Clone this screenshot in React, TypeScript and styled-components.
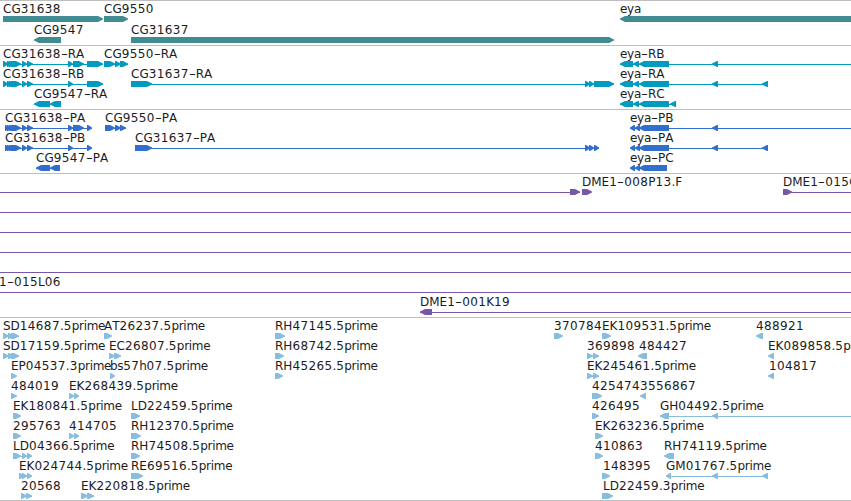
import React from "react";
import styled, { createGlobalStyle } from "styled-components";

type Block = [number, number];

interface IFeature {
    label?: string;
    // label start, when it is not the start of the feature
    labelAt?: number;
    reverse?: boolean;
    blocks?: Block[];
    // extent of the connecting line, when it is longer than the blocks
    span?: Block;
}

interface ITrack {
    name: string;
    color: string;
    rowHeight: number;
    padBottom: number;
    rows: IFeature[][];
}

const GlobalStyle = createGlobalStyle`
    body{
        margin: 0;
        background-color: #fff;
        overflow: hidden;
    }
`;

const VIEWER = styled.div`
    width: 851px;
    height: 501px;
    box-sizing: border-box;
    overflow: hidden;
    background-color: #fff;
    border-bottom: 1px solid #bebebe;
    font-family: "DejaVu Sans", sans-serif;
    font-size: 12px;
    font-kerning: none;
    line-height: 14px;
    color: #000;
`;
VIEWER.displayName = "VIEWER";

const TRACK = styled.section<{ $color: string; $padBottom: number }>`
    padding: 1px 0 ${props => props.$padBottom}px;
    border-top: 1px solid #bebebe;
    color: ${props => props.$color};
`;
TRACK.displayName = "TRACK";

const ROW = styled.div<{ $height: number }>`
    position: relative;
    height: ${props => props.$height}px;
`;
ROW.displayName = "ROW";

// features sit at their map coordinate
const FEATURE = styled.div`
    position: absolute;
    top: 0;
    display: grid;
    grid-template-rows: 14px 6px;
`;
FEATURE.displayName = "FEATURE";

const LABEL = styled.span`
    color: #1c1c1c;
    white-space: nowrap;
    .digits{
        letter-spacing: 0.37px;
    }
    .lower{
        letter-spacing: -0.3px;
    }
    .dash{
        display: inline-block;
        width: 7px;
        text-align: center;
        transform: scaleX(1.6);
    }
`;
LABEL.displayName = "LABEL";

const GLYPH = styled.svg`
    display: block;
    height: 6px;
    grid-row: 2;
    fill: currentColor;
    overflow: visible;
`;
GLYPH.displayName = "GLYPH";

const r = (label: string, ...blocks: Block[]): IFeature => ({ label, blocks });
const l = (label: string, ...blocks: Block[]): IFeature => ({ label, blocks, reverse: true });
const line = (from = 0, to = 851): IFeature => ({ span: [from, to] });

const HEAD: Block[] = [[3, 8], [7, 11], [9, 15], [11, 21], [22, 27], [27, 33]];
const P_HEAD: Block[] = [[5, 9], [7, 11], [9, 15], [11, 21], [22, 27], [27, 33]];
const SD: Block[] = [[3, 9], [8, 14], [11, 19]];
const EYA: Block[] = [[620, 633], [633, 639], [639, 669]];
const P_EYA: Block[] = [[630, 635], [635, 640], [639, 669]];

const tracks: ITrack[] = [
    {
        name: "genes", color: "#408c92", rowHeight: 21, padBottom: 1,
        rows: [
            [r("CG31638", [3, 103]), r("CG9550", [104, 128]), l("eya", [620, 860])],
            [l("CG9547", [34, 61]), r("CG31637", [131, 614])],
        ],
    },
    {
        name: "transcripts", color: "#009bbe", rowHeight: 20, padBottom: 2,
        rows: [
            [
                r("CG31638-RA", ...HEAD, [68, 73], [73, 84], [87, 103]),
                r("CG9550-RA", [104, 115], [115, 121], [120, 128]),
                { ...l("eya-RB", ...EYA, [712, 718]), span: [620, 851] },
            ],
            [
                r("CG31638-RB", ...HEAD, [68, 73], [87, 103]),
                r("CG31637-RA", [131, 152], [585, 590], [589, 594], [594, 614]),
                l("eya-RA", ...EYA, [712, 718], [762, 768]),
            ],
            [l("CG9547-RA", [34, 50], [50, 61]), l("eya-RC", ...EYA, [670, 676])],
        ],
    },
    {
        name: "proteins", color: "#326ecd", rowHeight: 20, padBottom: 2,
        rows: [
            [
                r("CG31638-PA", ...P_HEAD, [68, 73], [73, 84], [87, 92]),
                r("CG9550-PA", [105, 115], [115, 121], [120, 126]),
                { ...l("eya-PB", ...P_EYA, [712, 718]), span: [630, 851] },
            ],
            [
                r("CG31638-PB", ...P_HEAD, [68, 73], [87, 92]),
                r("CG31637-PA", [135, 152], [585, 590], [589, 594], [594, 599]),
                l("eya-PA", ...P_EYA, [712, 718], [762, 768]),
            ],
            [l("CG9547-PA", [36, 50], [50, 60]), l("eya-PC", [630, 635], [635, 640], [639, 667])],
        ],
    },
    {
        name: "clones", color: "#7857a8", rowHeight: 20, padBottom: 2,
        rows: [
            [
                { blocks: [[570, 580]], span: [0, 580] },
                r("DME1-008P13.F", [582, 592]),
                { ...r("DME1-015O12", [783, 792]), span: [783, 851] },
            ],
            [line()],
            [line()],
            [line()],
            [line()],
            [{ ...line(), label: "1-015L06", labelAt: -1 }],
            [{ ...l("DME1-001K19", [420, 432]), span: [420, 851] }],
        ],
    },
    {
        name: "reads", color: "#87bddf", rowHeight: 20, padBottom: 1,
        rows: [
            [
                r("SD14687.5prime", ...SD), r("AT26237.5prime", [104, 112]),
                r("RH47145.5prime", [275, 285]), r("370784", [554, 563]),
                r("EK109531.5prime", [602, 611]), l("488921", [756, 763]),
            ],
            [
                r("SD17159.5prime", ...SD), r("EC26807.5prime", [109, 115], [114, 121]),
                r("RH68742.5prime", [275, 284]), r("369898", [587, 593], [593, 599]),
                { ...l("484427", [638, 647]), labelAt: 639 }, l("EK089858.5prime", [768, 774]),
            ],
            [
                r("EP04537.3prime", [11, 17]), r("bs57h07.5prime", [110, 115]),
                r("RH45265.5prime", [275, 283]), r("EK245461.5prime", [587, 593], [593, 599]),
                { ...l("104817", [768, 774]), labelAt: 769 },
            ],
            [
                r("484019", [11, 17]), r("EK268439.5prime", [69, 74], [74, 79]),
                r("425474", [592, 602]), l("3556867", [640, 646]),
            ],
            [
                r("EK180841.5prime", [13, 21]), r("LD22459.5prime", [131, 140]),
                r("426495", [592, 599]),
                { ...l("GH04492.5prime", [660, 669], [712, 718]), span: [660, 851] },
            ],
            [
                r("295763", [13, 21]), r("414705", [69, 74], [74, 79]),
                r("RH12370.5prime", [131, 141]), r("EK263236.5prime", [595, 603]),
            ],
            [
                r("LD04366.5prime", [13, 21], [22, 27], [27, 32]), r("RH74508.5prime", [131, 140]),
                r("410863", [595, 603]), l("RH74119.5prime", [664, 674]),
            ],
            [
                r("EK024744.5prime", [19, 24], [22, 27], [27, 32]), r("RE69516.5prime", [131, 143]),
                { ...r("148395", [602, 610]), labelAt: 603 },
                l("GM01767.5prime", [666, 671], [712, 718], [762, 768]),
            ],
            [
                r("20568", [21, 27], [26, 32]), r("EK220818.5prime", [81, 88], [87, 94]),
                { ...r("LD22459.3prime", [602, 613]), labelAt: 603 },
            ],
        ],
    },
];

const arrow = ([from, to]: Block, reverse?: boolean) => {
    const neck = Math.min(5, to - from - 1);
    return reverse
        ? `${to},0 ${from + neck},0 ${from},2.5 ${from},3.5 ${from + neck},6 ${to},6`
        : `${from},0 ${to - neck},0 ${to},2.5 ${to},3.5 ${to - neck},6 ${from},6`;
};

const tokenClass = (token: string) => {
    if (token === "-") return "dash";
    if (/\d/.test(token)) return "digits";
    return /[a-z]/.test(token) ? "lower" : "upper";
};

const Feature = ({ label, labelAt, reverse, blocks = [], span }: IFeature) => {
    const [start, end] = span || [blocks[0][0], blocks[blocks.length - 1][1]];
    const tokens = label ? label.match(/\d+|[a-z]+|-|[^\da-z-]+/g) || [] : [];
    return (
        <FEATURE style={{ left: start, width: end - start }}>
            {label && (
                <LABEL style={{ marginLeft: (labelAt ?? start) - start }}>
                    {tokens.map((token, i) => (
                        <span key={i} className={tokenClass(token)}>{token}</span>
                    ))}
                </LABEL>
            )}
            <GLYPH width={end - start} viewBox={`${start} 0 ${end - start} 6`}>
                {(span || blocks.length > 1) && <rect x={start} y={3} width={end - start} height={1} />}
                {blocks.map((block, i) => (
                    <polygon key={i} points={arrow(block, reverse)} />
                ))}
            </GLYPH>
        </FEATURE>
    );
};

const App = () => (
    <>
        <GlobalStyle />
        <VIEWER>
            {tracks.map(track => (
                <TRACK key={track.name} $color={track.color} $padBottom={track.padBottom}>
                    {track.rows.map((row, i) => (
                        <ROW key={i} $height={track.rowHeight}>
                            {row.map((feature, j) => <Feature key={j} {...feature} />)}
                        </ROW>
                    ))}
                </TRACK>
            ))}
        </VIEWER>
    </>
);

export default App;
